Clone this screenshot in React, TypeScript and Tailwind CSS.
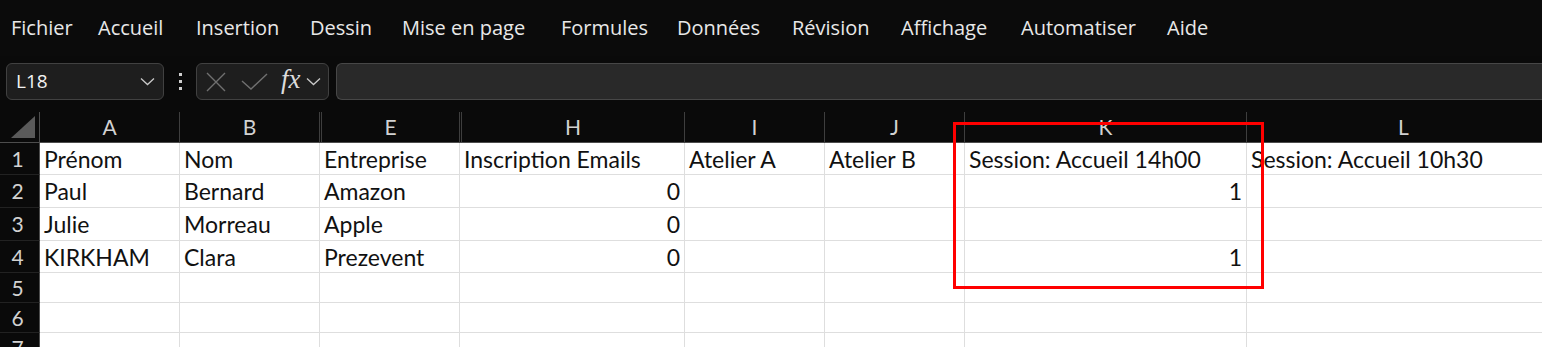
import React from 'react';

const menu = [
  { label: 'Fichier', w: 'w-[87px]' },
  { label: 'Accueil', w: 'w-[98px]' },
  { label: 'Insertion', w: 'w-[114px]' },
  { label: 'Dessin', w: 'w-[92px]' },
  { label: 'Mise en page', w: 'w-[159px]' },
  { label: 'Formules', w: 'w-[116px]' },
  { label: 'Données', w: 'w-[115px]' },
  { label: 'Révision', w: 'w-[109px]' },
  { label: 'Affichage', w: 'w-[120px]' },
  { label: 'Automatiser', w: 'w-[146px]' },
  { label: 'Aide', w: 'w-[60px]' },
];

// visible column letters; E and H follow hidden columns
const columns = [
  { letter: 'A', hiddenBefore: false },
  { letter: 'B', hiddenBefore: false },
  { letter: 'E', hiddenBefore: true },
  { letter: 'H', hiddenBefore: true },
  { letter: 'I', hiddenBefore: false },
  { letter: 'J', hiddenBefore: false },
  { letter: 'K', hiddenBefore: false },
  { letter: 'L', hiddenBefore: false },
];

const rows: string[][] = [
  ['Prénom', 'Nom', 'Entreprise', 'Inscription Emails', 'Atelier A', 'Atelier B', 'Session: Accueil 14h00', 'Session: Accueil 10h30'],
  ['Paul', 'Bernard', 'Amazon', '0', '', '', '1', ''],
  ['Julie', 'Morreau', 'Apple', '0', '', '', '', ''],
  ['KIRKHAM', 'Clara', 'Prezevent', '0', '', '', '1', ''],
  ['', '', '', '', '', '', '', ''],
  ['', '', '', '', '', '', '', ''],
  ['', '', '', '', '', '', '', ''],
];

function Chevron({ className = '' }: { className?: string }) {
  return (
    <svg width="15" height="9" viewBox="0 0 15 9" className={className}>
      <path d="M1 1.5 L7.5 7.5 L14 1.5" fill="none" stroke="#c8c8c8" strokeWidth="1.3" />
    </svg>
  );
}

function NameBox() {
  return (
    <div className="flex items-center justify-between w-[158px] h-[37px] ml-[6px] pl-[9px] pr-[8px] rounded-[6px] border border-[#414141] bg-[#1e1e1e]">
      <span className="text-[19px] text-[#f2f2f2] font-['Open_Sans',sans-serif]">L18</span>
      <Chevron />
    </div>
  );
}

function FormulaButtons() {
  return (
    <div className="flex items-center w-[133px] h-[37px] rounded-[6px] border border-[#414141] bg-[#1e1e1e] pl-[9px]">
      <svg width="20" height="20" viewBox="0 0 20 20">
        <path d="M1 1 L19 19 M19 1 L1 19" stroke="#707070" strokeWidth="1.4" fill="none" />
      </svg>
      <svg width="27" height="17" viewBox="0 0 27 17" className="ml-[15px]">
        <path d="M1 8 L10 16 L26 1" stroke="#707070" strokeWidth="1.4" fill="none" />
      </svg>
      <span className="ml-[13px] text-[27px] leading-none italic text-[#dcdcdc] font-['Liberation_Serif',serif] -mt-[4px]">fx</span>
      <Chevron className="ml-[5px]" />
    </div>
  );
}

export default function App() {
  return (
    <div className="relative w-[1542px] h-[347px] overflow-hidden bg-[#0a0a0a] font-['Lato',sans-serif]">
      {/* --- Ribbon tabs --- */}
      <nav className="flex items-center h-[56px] pl-[11px] bg-[#0b0b0b]">
        {menu.map((m) => (
          <span key={m.label} className={`${m.w} shrink-0 text-[20px] text-[#e8e8e8] font-['Open_Sans',sans-serif] whitespace-nowrap`}>
            {m.label}
          </span>
        ))}
      </nav>

      {/* --- Name box + formula bar --- */}
      <div className="flex items-start h-[56px] pt-[7px]">
        <NameBox />
        <div className="flex flex-col justify-center items-center gap-[4px] w-[32px] h-[37px]">
          <span className="w-[3px] h-[3px] bg-[#cfcfcf]" />
          <span className="w-[3px] h-[3px] bg-[#cfcfcf]" />
          <span className="w-[3px] h-[3px] bg-[#cfcfcf]" />
        </div>
        <FormulaButtons />
        <div className="flex-1 h-[37px] ml-[7px] rounded-l-[6px] border border-r-0 border-[#474747] bg-[#292929]" />
      </div>

      {/* --- Sheet grid --- */}
      <div className="grid w-[1561px] grid-cols-[40px_140px_140px_140px_225px_140px_140px_282px_314px] grid-rows-[31px_32px_33px_33px_32px_30px_30px_30px]">
        {/* corner */}
        <div className="flex items-end justify-end pr-[4px] pb-[4px] border-r border-b border-[#4d4d4d] bg-[#0a0a0a]">
          <svg width="24" height="22" viewBox="0 0 24 22">
            <polygon points="24,0 24,22 0,22" fill="#5a5a5a" />
          </svg>
        </div>
        {columns.map((c) => (
          <div key={c.letter} className="flex border-b border-[#4d4d4d] bg-[#0a0a0a] border-r border-r-[#3e3e3e]">
            {c.hiddenBefore && <div className="w-[3px] h-full border-r border-[#3e3e3e] -ml-[1px]" />}
            <div className="flex-1 flex items-center justify-center text-[21px] text-[#d2d2d2] font-['Lato',sans-serif]">
              {c.letter}
            </div>
          </div>
        ))}

        {rows.map((row, r) => (
          <React.Fragment key={r}>
            <div className="flex items-center justify-center pr-[4px] border-r border-r-[#4d4d4d] border-b border-b-[#222] bg-[#0a0a0a] text-[21px] text-[#d2d2d2]">
              {r + 1}
            </div>
            {row.map((v, i) => {
              const num = /^\d+$/.test(v);
              return (
                <div
                  key={i}
                  className={`flex items-center px-[4px] pt-[1px] bg-white border-r border-b border-[#dedede] text-[23px] text-[#111] whitespace-nowrap overflow-visible ${num ? 'justify-end' : 'justify-start'}`}
                >
                  {v}
                </div>
              );
            })}
          </React.Fragment>
        ))}
      </div>

      {/* --- red highlight around column K --- */}
      <div className="absolute left-[953px] top-[122px] w-[311px] h-[167px] border-[3px] border-[#ff0000] pointer-events-none" />
    </div>
  );
}
